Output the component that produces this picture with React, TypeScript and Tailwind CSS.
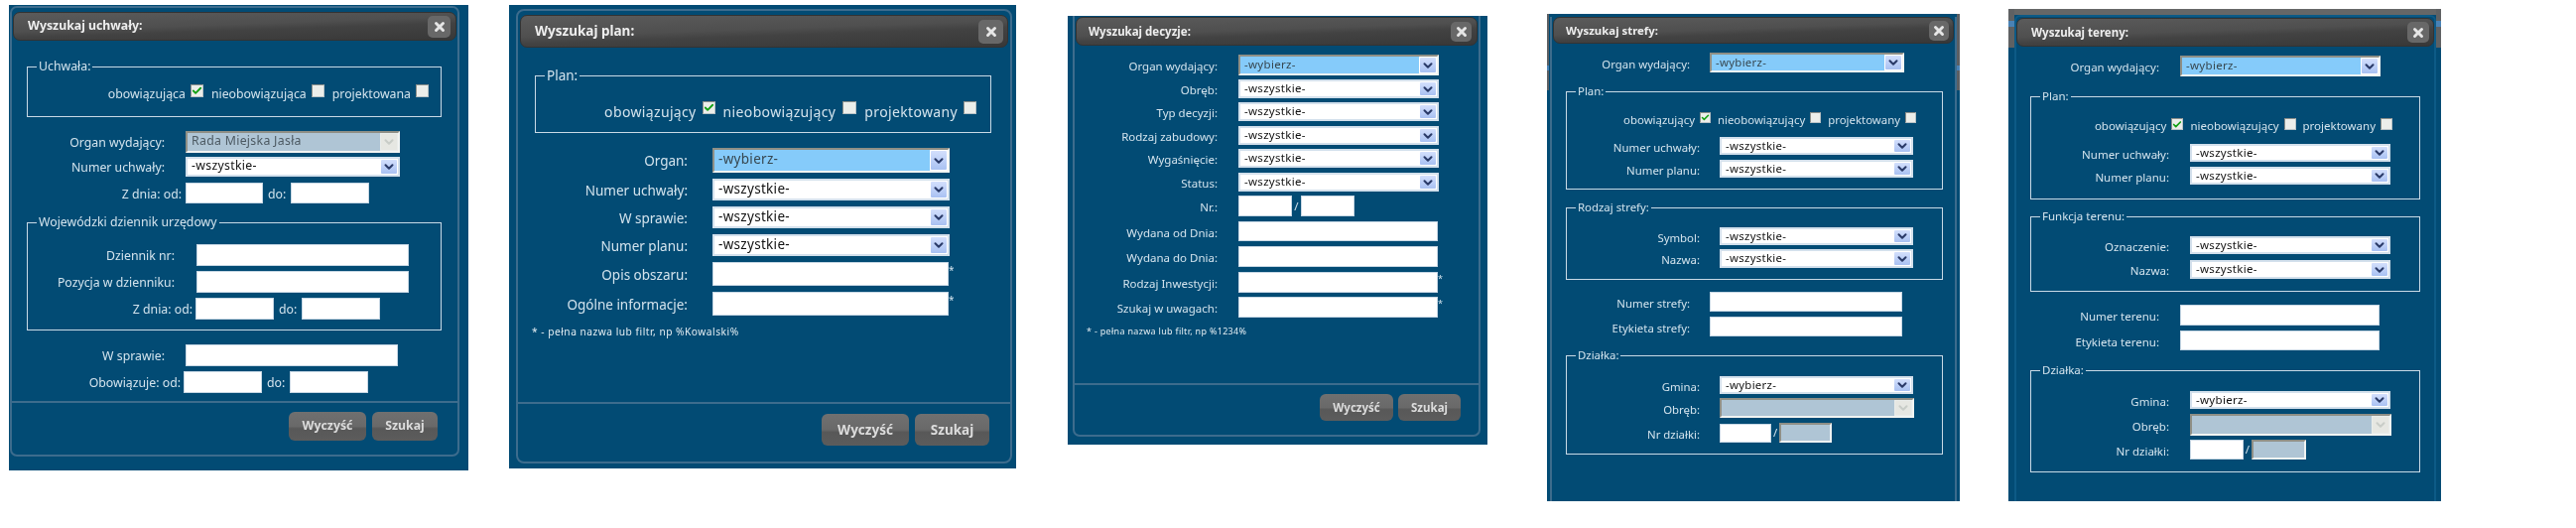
import type { ReactNode } from 'react'
import clsx from 'clsx'
import { Check, ChevronDown, X } from 'lucide-react'

function Select({ text, variant, className }: { text?: string; variant?: 'active' | 'disabled'; className: string }) {
  return (
    <div
      className={clsx(
        'flex items-stretch border-2',
        variant === 'disabled' || variant === 'active'
          ? 'border-[#f2f4f2] border-t-[#8f8f86] border-l-[#8f8f86]'
          : 'border-[#d3e0ec]',
        variant === 'disabled' ? 'bg-[#e9ecea]' : 'bg-white',
        className,
      )}
    >
      <div
        className={clsx(
          'flex-1 flex items-center pl-[4px] pb-[1px] whitespace-nowrap leading-none tracking-[0.3px]',
          variant === 'active' && 'bg-[#85cbfa] text-[#37474f]',
          variant === 'disabled' && 'bg-[#afc5d5] text-[#4d5a63]',
          !variant && 'bg-white text-[#111]',
        )}
      >
        {text}
      </div>
      <div
        className={clsx(
          'w-[16px] my-[1px] mr-[1px] ml-[1px] flex items-center justify-center rounded-[1px]',
          variant === 'disabled' ? 'bg-[#e6e7e2]' : 'bg-gradient-to-b from-[#d3dffc] to-[#a9c1f2]',
        )}
      >
        <ChevronDown
          size={14}
          strokeWidth={3.5}
          className={variant === 'disabled' ? 'text-[#c9cdc8]' : 'text-[#2a3a68]'}
        />
      </div>
    </div>
  )
}

function Input({ disabled, className }: { disabled?: boolean; className: string }) {
  return (
    <div
      className={clsx(
        'border',
        disabled ? 'bg-[#afc5d5] border-2 border-[#eef2f2] border-t-[#8f8f86] border-l-[#8f8f86]' : 'bg-white border-[#c7d7e4]',
        className,
      )}
    />
  )
}

function Row({ label, labelClass, className, children }: { label: string; labelClass: string; className: string; children: ReactNode }) {
  return (
    <div className={clsx('flex items-center', className)}>
      <span className={clsx('text-right shrink-0 whitespace-nowrap leading-none pt-[3px]', labelClass)}>{label}</span>
      {children}
    </div>
  )
}

function Box({ title, className, children }: { title: string; className: string; children: ReactNode }) {
  return (
    <fieldset className={clsx('border border-[#c9dae6] shrink-0', className)}>
      <legend className="ml-[9px] px-[2px] leading-[16px]">{title}</legend>
      {children}
    </fieldset>
  )
}

function Tick({ checked, className }: { checked?: boolean; className: string }) {
  return (
    <span
      className={clsx(
        'flex items-center justify-center bg-[#eceeea] border border-[#b9c3c6] border-t-[#8c8f8a] border-l-[#8c8f8a] shrink-0 self-start',
        className,
      )}
    >
      {checked && <Check size={11} strokeWidth={4} className="text-[#12a012]" />}
    </span>
  )
}

function Header({ title, className, closeClass }: { title: string; className: string; closeClass: string }) {
  return (
    <div
      className={clsx(
        'shrink-0 flex items-center justify-between rounded-[7px] font-bold text-[#eeeeee] border border-[#333] bg-[linear-gradient(178deg,#5b5b5b_0%,#4f4f4f_45%,#424242_60%,#383838_100%)]',
        className,
      )}
    >
      <span>{title}</span>
      <span className={clsx('flex items-center justify-center rounded-[5px] bg-[#686868]', closeClass)}>
        <X size={14} strokeWidth={5} className="text-[#e6e6e6]" />
      </span>
    </div>
  )
}

function Buttons({ className, clearClass, searchClass }: { className: string; clearClass: string; searchClass: string }) {
  const base =
    'flex items-center justify-center rounded-[6px] font-bold text-[#dcdcdc] bg-[linear-gradient(#707070_0%,#696969_50%,#585858_58%,#5c5c5c_100%)]'
  return (
    <div className={clsx('mt-auto shrink-0 flex justify-end border-t-2 border-[#3d6c8d]', className)}>
      <span className={clsx(base, clearClass)}>Wyczyść</span>
      <span className={clsx(base, searchClass)}>Szukaj</span>
    </div>
  )
}

export default function App() {
  return (
    <div className="w-[2596px] h-[532px] overflow-hidden bg-white flex items-start font-['Noto_Sans',sans-serif] text-[#d3e3ed] blur-[0.4px]">
      {/* Wyszukaj uchwały */}
      <div className="shrink-0 ml-[9px] mt-[5px] w-[463px] h-[469px] bg-[#024b74] pl-[1px] pt-[1px] text-[12.3px]">
        <div className="w-[453px] h-[454px] border-2 border-[#3d6c8d] rounded-[7px] flex flex-col">
          <Header title="Wyszukaj uchwały:" className="mx-px mt-[4px] h-[29px] pl-[14px] pr-[5px]" closeClass="w-[23px] h-[22px]" />
          <Box title="Uchwała:" className="ml-[15px] mt-[18px] w-[418px] h-[59px]">
            <div className="flex justify-end pr-[12px] mt-[10px] h-[14px] leading-[20px]">
              <span>obowiązująca</span>
              <Tick checked className="ml-[5px] w-[13px] h-[13px]" />
              <span className="ml-[8px]">nieobowiązująca</span>
              <Tick className="ml-[5px] w-[13px] h-[13px]" />
              <span className="ml-[8px]">projektowana</span>
              <Tick className="ml-[5px] w-[13px] h-[13px]" />
            </div>
          </Box>
          <Row label="Organ wydający:" labelClass="w-[154px] mr-[21px]" className="mt-[14px]">
            <Select text="Rada Miejska Jasła" variant="disabled" className="w-[216px] h-[22px]" />
          </Row>
          <Row label="Numer uchwały:" labelClass="w-[154px] mr-[21px]" className="mt-[4px]">
            <Select text="-wszystkie-" className="w-[216px] h-[20px]" />
          </Row>
          <Row label="Z dnia: od:" labelClass="w-[171px] mr-[4px]" className="mt-[6px]">
            <Input className="w-[78px] h-[21px]" />
            <span className="w-[28px] pl-[5px] pt-[3px] leading-none">do:</span>
            <Input className="w-[79px] h-[21px]" />
          </Row>
          <Box title="Wojewódzki dziennik urzędowy" className="ml-[15px] mt-[11px] w-[418px] h-[117px]">
            <Row label="Dziennik nr:" labelClass="w-[148px] mr-[22px]" className="mt-[14px]">
              <Input className="w-[214px] h-[22px]" />
            </Row>
            <Row label="Pozycja w dzienniku:" labelClass="w-[148px] mr-[22px]" className="mt-[5px]">
              <Input className="w-[214px] h-[22px]" />
            </Row>
            <Row label="Z dnia: od:" labelClass="w-[166px] mr-[3px]" className="mt-[5px]">
              <Input className="w-[79px] h-[22px]" />
              <span className="w-[28px] pl-[5px] pt-[3px] leading-none">do:</span>
              <Input className="w-[79px] h-[22px]" />
            </Row>
          </Box>
          <Row label="W sprawie:" labelClass="w-[154px] mr-[21px]" className="mt-[14px]">
            <Input className="w-[214px] h-[22px]" />
          </Row>
          <Row label="Obowiązuje: od:" labelClass="w-[170px] mr-[3px]" className="mt-[5px]">
            <Input className="w-[79px] h-[22px]" />
            <span className="w-[28px] pl-[5px] pt-[3px] leading-none">do:</span>
            <Input className="w-[79px] h-[22px]" />
          </Row>
          <Buttons className="h-[54px] pt-[9px] pr-[20px] gap-[6px]" clearClass="w-[78px] h-[29px]" searchClass="w-[66px] h-[29px]" />
        </div>
      </div>

      {/* Wyszukaj plan */}
      <div className="shrink-0 ml-[41px] mt-[5px] w-[511px] h-[467px] bg-[#024b74] pl-[7px] pt-[4px] text-[13.5px]">
        <div className="w-[500px] h-[458px] border-2 border-[#3d6c8d] rounded-[8px] flex flex-col">
          <Header title="Wyszukaj plan:" className="mx-[2px] mt-[4px] h-[33px] pl-[14px] pr-[4px]" closeClass="w-[25px] h-[24px]" />
          <Box title="Plan:" className="ml-[17px] mt-[20px] w-[460px] h-[66px]">
            <div className="flex justify-end pr-[14px] mt-[18px] h-[14px] leading-[22px] text-[14px] tracking-[0.35px]">
              <span>obowiązujący</span>
              <Tick checked className="ml-[6px] w-[13px] h-[13px]" />
              <span className="ml-[8px]">nieobowiązujący</span>
              <Tick className="ml-[7px] w-[14px] h-[13px]" />
              <span className="ml-[8px]">projektowany</span>
              <Tick className="ml-[6px] w-[13px] h-[13px]" />
            </div>
          </Box>
          <Row label="Organ:" labelClass="w-[171px] mr-[25px]" className="mt-[15px]">
            <Select text="-wybierz-" variant="active" className="w-[239px] h-[25px]" />
          </Row>
          <Row label="Numer uchwały:" labelClass="w-[171px] mr-[25px]" className="mt-[6px]">
            <Select text="-wszystkie-" className="w-[239px] h-[22px]" />
          </Row>
          <Row label="W sprawie:" labelClass="w-[171px] mr-[25px]" className="mt-[6px]">
            <Select text="-wszystkie-" className="w-[239px] h-[22px]" />
          </Row>
          <Row label="Numer planu:" labelClass="w-[171px] mr-[25px]" className="mt-[6px]">
            <Select text="-wszystkie-" className="w-[239px] h-[22px]" />
          </Row>
          <Row label="Opis obszaru:" labelClass="w-[171px] mr-[25px]" className="mt-[6px]">
            <Input className="w-[238px] h-[24px]" />
            <span className="self-start text-[10px] leading-[16px]">*</span>
          </Row>
          <Row label="Ogólne informacje:" labelClass="w-[171px] mr-[25px]" className="mt-[6px]">
            <Input className="w-[238px] h-[24px]" />
            <span className="self-start text-[10px] leading-[16px]">*</span>
          </Row>
          <p className="ml-[14px] mt-[9px] text-[10.2px] leading-[14px] tracking-[0.5px] text-[#e4edf2]">* - pełna nazwa lub filtr, np %Kowalski%</p>
          <Buttons className="h-[60px] pt-[10px] pr-[21px] gap-[6px]" clearClass="w-[88px] h-[32px]" searchClass="w-[75px] h-[32px]" />
        </div>
      </div>

      {/* Wyszukaj decyzje */}
      <div className="shrink-0 ml-[52px] mt-[16px] w-[423px] h-[432px] bg-[#024b74] pl-[5px] text-[11.5px]">
        <div className="w-[411px] h-[424px] border-x-2 border-b-2 border-[#3d6c8d] rounded-b-[7px] flex flex-col">
          <Header title="Wyszukaj decyzje:" className="mx-px mt-px h-[29px] pl-[12px] pr-[5px]" closeClass="w-[21px] h-[20px]" />
          <Row label="Organ wydający:" labelClass="w-[144px] mr-[21px]" className="mt-[9px]">
            <Select text="-wybierz-" variant="active" className="w-[202px] h-[21px]" />
          </Row>
          <Row label="Obręb:" labelClass="w-[144px] mr-[21px]" className="mt-[4px]">
            <Select text="-wszystkie-" className="w-[202px] h-[19px]" />
          </Row>
          <Row label="Typ decyzji:" labelClass="w-[144px] mr-[21px]" className="mt-[4px]">
            <Select text="-wszystkie-" className="w-[202px] h-[19px]" />
          </Row>
          <Row label="Rodzaj zabudowy:" labelClass="w-[144px] mr-[21px]" className="mt-[5px]">
            <Select text="-wszystkie-" className="w-[202px] h-[19px]" />
          </Row>
          <Row label="Wygaśnięcie:" labelClass="w-[144px] mr-[21px]" className="mt-[4px]">
            <Select text="-wszystkie-" className="w-[202px] h-[19px]" />
          </Row>
          <Row label="Status:" labelClass="w-[144px] mr-[21px]" className="mt-[5px]">
            <Select text="-wszystkie-" className="w-[202px] h-[19px]" />
          </Row>
          <Row label="Nr.:" labelClass="w-[144px] mr-[21px]" className="mt-[4px]">
            <Input className="w-[54px] h-[21px]" />
            <span className="w-[9px] text-center leading-none">/</span>
            <Input className="w-[54px] h-[21px]" />
          </Row>
          <Row label="Wydana od Dnia:" labelClass="w-[144px] mr-[21px]" className="mt-[5px]">
            <Input className="w-[201px] h-[20px]" />
          </Row>
          <Row label="Wydana do Dnia:" labelClass="w-[144px] mr-[21px]" className="mt-[5px]">
            <Input className="w-[201px] h-[21px]" />
          </Row>
          <Row label="Rodzaj Inwestycji:" labelClass="w-[144px] mr-[21px]" className="mt-[5px]">
            <Input className="w-[201px] h-[21px]" />
            <span className="self-start text-[9px] leading-[14px]">*</span>
          </Row>
          <Row label="Szukaj w uwagach:" labelClass="w-[144px] mr-[21px]" className="mt-[4px]">
            <Input className="w-[201px] h-[21px]" />
            <span className="self-start text-[9px] leading-[14px]">*</span>
          </Row>
          <p className="ml-[12px] mt-[7px] text-[9px] leading-[14px] tracking-[0.3px] text-[#e4edf2]">* - pełna nazwa lub filtr, np %1234%</p>
          <Buttons className="h-[52px] pt-[9px] pr-[18px] gap-[5px]" clearClass="w-[74px] h-[27px]" searchClass="w-[63px] h-[27px]" />
        </div>
      </div>

      {/* Wyszukaj strefy */}
      <div className="relative shrink-0 ml-[60px] mt-[14px] w-[416px] h-[491px] bg-[#024b74] pl-[3px] pt-[3px] text-[11.4px] overflow-hidden">
        <span className="absolute left-0 top-0 w-[2px] h-[77px] bg-[#5c5f63]" />
        <span className="absolute left-0 top-[52px] w-[2px] h-[5px] bg-[#4a82b5]" />
        <span className="absolute right-0 top-0 w-[3px] h-[77px] bg-[#5c5f63]" />
        <span className="absolute right-0 top-[52px] w-[3px] h-[5px] bg-[#4a82b5]" />
        <div className="w-[410px] h-[488px] border-x-2 border-[#3d6c8d] flex flex-col">
          <Header title="Wyszukaj strefy:" className="mx-px h-[27px] pl-[12px] pr-[4px]" closeClass="w-[20px] h-[20px]" />
          <Row label="Organ wydający:" labelClass="w-[139px] mr-[20px]" className="mt-[9px]">
            <Select text="-wybierz-" variant="active" className="w-[196px] h-[20px]" />
          </Row>
          <Box title="Plan:" className="ml-[14px] mt-[11px] w-[380px] h-[107px]">
            <div className="flex justify-end pr-[26px] mt-[13px] h-[12px] leading-[16px]">
              <span>obowiązujący</span>
              <Tick checked className="ml-[5px] w-[11px] h-[11px]" />
              <span className="ml-[7px]">nieobowiązujący</span>
              <Tick className="ml-[5px] w-[11px] h-[11px]" />
              <span className="ml-[7px]">projektowany</span>
              <Tick className="ml-[5px] w-[11px] h-[11px]" />
            </div>
            <Row label="Numer uchwały:" labelClass="w-[134px] mr-[20px]" className="mt-[13px]">
              <Select text="-wszystkie-" className="w-[195px] h-[18px]" />
            </Row>
            <Row label="Numer planu:" labelClass="w-[134px] mr-[20px]" className="mt-[5px]">
              <Select text="-wszystkie-" className="w-[195px] h-[18px]" />
            </Row>
          </Box>
          <Box title="Rodzaj strefy:" className="ml-[14px] mt-[10px] w-[380px] h-[81px]">
            <Row label="Symbol:" labelClass="w-[134px] mr-[20px]" className="mt-[12px]">
              <Select text="-wszystkie-" className="w-[195px] h-[18px]" />
            </Row>
            <Row label="Nazwa:" labelClass="w-[134px] mr-[20px]" className="mt-[4px]">
              <Select text="-wszystkie-" className="w-[195px] h-[19px]" />
            </Row>
          </Box>
          <Row label="Numer strefy:" labelClass="w-[139px] mr-[20px]" className="mt-[12px]">
            <Input className="w-[194px] h-[20px]" />
          </Row>
          <Row label="Etykieta strefy:" labelClass="w-[139px] mr-[20px]" className="mt-[5px]">
            <Input className="w-[194px] h-[20px]" />
          </Row>
          <Box title="Działka:" className="ml-[14px] mt-[11px] w-[380px] h-[108px]">
            <Row label="Gmina:" labelClass="w-[134px] mr-[20px]" className="mt-[13px]">
              <Select text="-wybierz-" className="w-[195px] h-[18px]" />
            </Row>
            <Row label="Obręb:" labelClass="w-[134px] mr-[20px]" className="mt-[4px]">
              <Select variant="disabled" className="w-[196px] h-[20px]" />
            </Row>
            <Row label="Nr działki:" labelClass="w-[134px] mr-[20px]" className="mt-[5px]">
              <Input className="w-[52px] h-[19px]" />
              <span className="w-[8px] text-center leading-none">/</span>
              <Input disabled className="w-[53px] h-[20px]" />
            </Row>
          </Box>
        </div>
      </div>

      {/* Wyszukaj tereny */}
      <div className="relative shrink-0 ml-[49px] mt-[9px] w-[436px] h-[496px] bg-[#024b74] pl-[6px] pt-[6px] text-[11.5px] overflow-hidden">
        <span className="absolute left-0 top-0 w-full h-[6px] bg-[#666767]" />
        <span className="absolute left-0 top-0 w-[6px] h-[39px] bg-[#5f6163]" />
        <span className="absolute left-0 top-[12px] w-[6px] h-[6px] bg-[#4a82b5]" />
        <span className="absolute right-0 top-0 w-[5px] h-[39px] bg-[#5f6163]" />
        <span className="absolute right-0 top-[12px] w-[5px] h-[6px] bg-[#4a82b5]" />
        <div className="w-[425px] h-[490px] border-x-2 border-t-2 border-[#0d5a86] rounded-t-[6px] flex flex-col">
          <Header title="Wyszukaj tereny:" className="mt-px h-[29px] pl-[14px] pr-[4px]" closeClass="w-[22px] h-[21px]" />
          <Row label="Organ wydający:" labelClass="w-[144px] mr-[21px]" className="mt-[9px]">
            <Select text="-wybierz-" variant="active" className="w-[202px] h-[21px]" />
          </Row>
          <Box title="Plan:" className="ml-[14px] mt-[12px] w-[393px] h-[112px]">
            <div className="flex justify-end pr-[27px] mt-[14px] h-[12px] leading-[16px]">
              <span>obowiązujący</span>
              <Tick checked className="ml-[5px] w-[12px] h-[12px]" />
              <span className="ml-[7px]">nieobowiązujący</span>
              <Tick className="ml-[5px] w-[12px] h-[12px]" />
              <span className="ml-[7px]">projektowany</span>
              <Tick className="ml-[5px] w-[12px] h-[12px]" />
            </div>
            <Row label="Numer uchwały:" labelClass="w-[139px] mr-[21px]" className="mt-[14px]">
              <Select text="-wszystkie-" className="w-[202px] h-[18px]" />
            </Row>
            <Row label="Numer planu:" labelClass="w-[139px] mr-[21px]" className="mt-[5px]">
              <Select text="-wszystkie-" className="w-[202px] h-[18px]" />
            </Row>
          </Box>
          <Box title="Funkcja terenu:" className="ml-[14px] mt-[9px] w-[393px] h-[84px]">
            <Row label="Oznaczenie:" labelClass="w-[139px] mr-[21px]" className="mt-[12px]">
              <Select text="-wszystkie-" className="w-[202px] h-[18px]" />
            </Row>
            <Row label="Nazwa:" labelClass="w-[139px] mr-[21px]" className="mt-[6px]">
              <Select text="-wszystkie-" className="w-[202px] h-[19px]" />
            </Row>
          </Box>
          <Row label="Numer terenu:" labelClass="w-[144px] mr-[21px]" className="mt-[13px]">
            <Input className="w-[201px] h-[21px]" />
          </Row>
          <Row label="Etykieta terenu:" labelClass="w-[144px] mr-[21px]" className="mt-[5px]">
            <Input className="w-[201px] h-[20px]" />
          </Row>
          <Box title="Działka:" className="ml-[14px] mt-[12px] w-[393px] h-[111px]">
            <Row label="Gmina:" labelClass="w-[139px] mr-[21px]" className="mt-[13px]">
              <Select text="-wybierz-" className="w-[202px] h-[18px]" />
            </Row>
            <Row label="Obręb:" labelClass="w-[139px] mr-[21px]" className="mt-[5px]">
              <Select variant="disabled" className="w-[203px] h-[22px]" />
            </Row>
            <Row label="Nr działki:" labelClass="w-[139px] mr-[21px]" className="mt-[4px]">
              <Input className="w-[54px] h-[20px]" />
              <span className="w-[8px] text-center leading-none">/</span>
              <Input disabled className="w-[55px] h-[20px]" />
            </Row>
          </Box>
        </div>
      </div>
    </div>
  )
}
